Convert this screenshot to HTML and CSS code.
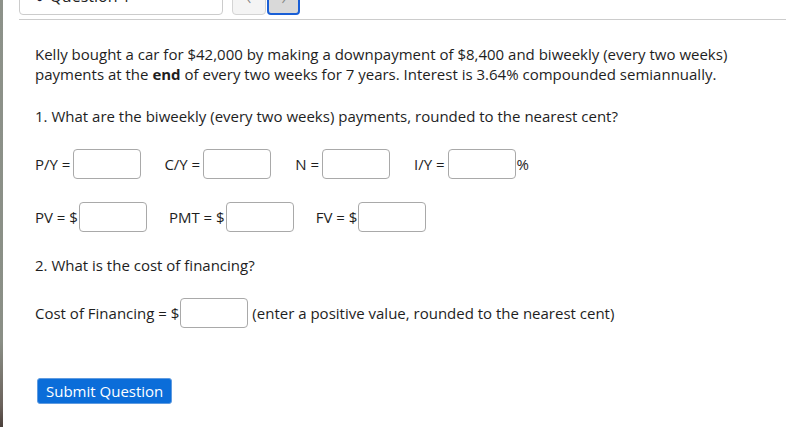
FILE: index.html
```html
<!DOCTYPE html>
<html>
<head>
<meta charset="utf-8">
<link rel="stylesheet" href="styles.css">
</head>
<body>
<div class="page">
  <div class="strip"></div>
  <div class="main">
    <div class="header">
      <div class="qselect"><span class="dot">●</span> Question 1</div>
      <div class="navbtns">
        <div class="navbtn"><span class="chev">‹</span></div>
        <div class="navbtn active"><span class="chev">›</span></div>
      </div>
    </div>
    <div class="rule"></div>
    <div class="content">
      <p class="para">Kelly bought a car for $42,000 by making a downpayment of $8,400 and biweekly (every two weeks) payments at the <b>end</b> of every two weeks for 7 years. Interest is 3.64% compounded semiannually.</p>
      <p class="para q">1. What are the biweekly (every two weeks) payments, rounded to the nearest cent?</p>
      <div class="row">
        <span class="grp g1"><span class="lbl">P/Y =</span><input class="box" type="text"></span>
        <span class="grp g2"><span class="lbl">C/Y =</span><input class="box" type="text"></span>
        <span class="grp g3"><span class="lbl">N =</span><input class="box" type="text"></span>
        <span class="grp g4"><span class="lbl">I/Y =</span><input class="box" type="text"><span class="pct">%</span></span>
      </div>
      <div class="row">
        <span class="grp h1"><span class="lbl dollar">PV = $</span><input class="box" type="text"></span>
        <span class="grp h2"><span class="lbl dollar">PMT = $</span><input class="box" type="text"></span>
        <span class="grp h3"><span class="lbl dollar">FV = $</span><input class="box" type="text"></span>
      </div>
      <p class="para q2">2. What is the cost of financing?</p>
      <div class="row">
        <span class="grp"><span class="lbl dollar">Cost of Financing = $</span><input class="box" type="text"><span class="note">(enter a positive value, rounded to the nearest cent)</span></span>
      </div>
      <button class="submit" type="button">Submit Question</button>
    </div>
  </div>
</div>
</body>
</html>
```

FILE: styles.css
```css
html, body {
  margin: 0;
  padding: 0;
  background: #ffffff;
}
body {
  font-family: "Open Sans", "Noto Sans", sans-serif;
  font-size: 15px;
  color: #1e1e1e;
}
.page {
  display: flex;
  min-height: 427px;
}
.strip {
  width: 3px;
  flex: 0 0 3px;
  background: linear-gradient(#8d928a 0%, #8a8f86 80%, #6b625c 95%, #4a3f3a 100%);
}
.main {
  flex: 1;
  padding-left: 16px;
}
.header {
  height: 15px;
  overflow: hidden;
  display: flex;
  align-items: flex-end;
}
.qselect {
  width: 204px;
  height: 30px;
  flex: 0 0 auto;
  border: 1px solid #cccccc;
  border-radius: 4px;
  box-sizing: border-box;
  padding-left: 16px;
  line-height: 20px;
  font-size: 16px;
  color: #222;
}
.dot {
  font-size: 12px;
  color: #1b1b3a;
  margin-right: 2px;
}
.navbtns {
  display: flex;
  margin-left: 9px;
}
.navbtn {
  width: 34px;
  height: 30px;
  box-sizing: border-box;
  border: 1px solid #d4d4d4;
  border-radius: 4px;
  background: #f4f4f4;
  text-align: center;
  padding-top: 5px;
  line-height: 16px;
  color: #888;
  font-size: 14px;
}
.navbtn.active {
  width: 33px;
  margin-left: 1px;
  padding-top: 4px;
  border: 2px solid #1a5fd6;
  background: #d9d9d9;
}
.rule {
  height: 1px;
  background: #cccccc;
  margin-top: 4px;
}
.content {
  padding-left: 16px;
  padding-top: 24px;
}
.para {
  margin: 0;
  line-height: 20px;
  max-width: 720px;
}
.para b {
  font-weight: 700;
}
.q {
  margin-top: 22px;
}
.q2 {
  margin-top: 23px;
}
.row {
  display: flex;
  align-items: center;
  margin-top: 23px;
  height: 30px;
}
.grp {
  display: inline-flex;
  align-items: center;
}
.lbl {
  margin-right: 3px;
  white-space: nowrap;
}
.lbl.dollar {
  margin-right: 1px;
}
.box {
  width: 68px;
  height: 30px;
  box-sizing: border-box;
  border: 1px solid #a9a9a9;
  border-radius: 4px;
  background: #fff;
  padding: 0;
  margin: 0;
  font-family: inherit;
  font-size: 14px;
}
.g2 { margin-left: 23px; }
.g3 { margin-left: 24px; }
.g4 { margin-left: 24px; }
.h2 { margin-left: 22px; }
.h3 { margin-left: 22px; }
.pct {
  margin-left: 1px;
}
.note {
  margin-left: 4px;
  white-space: nowrap;
}
.submit {
  display: block;
  margin-top: 50px;
  margin-left: 2px;
  height: 26px;
  padding: 0 8px;
  background: #0b6dd9;
  color: #ffffff;
  border: 1px solid #5f9be0;
  border-radius: 3px;
  font-family: "Open Sans", "Noto Sans", sans-serif;
  font-size: 15px;
  line-height: 24px;
}
```
